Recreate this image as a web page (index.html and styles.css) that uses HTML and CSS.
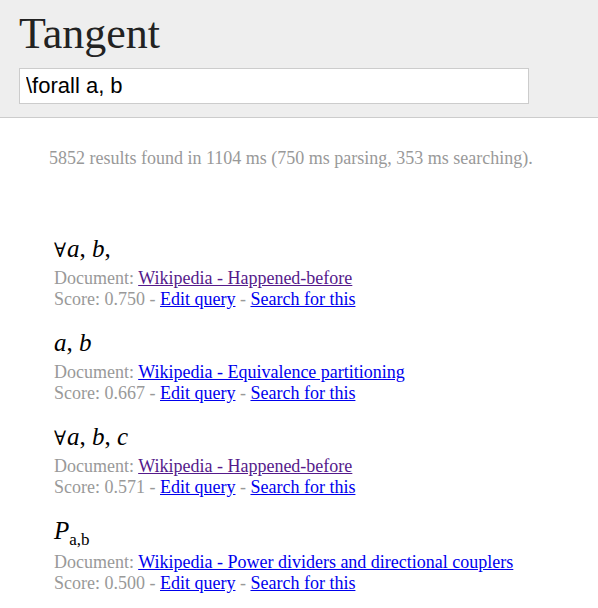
FILE: index.html
```html
<!DOCTYPE html>
<html lang="en">
<head>
    <meta charset="UTF-8">
    <title>Tangent</title>
    <link rel="stylesheet" href="styles.css">
</head>
<body>
    <div class="header">
        <h1>Tangent</h1>
        <input class="query" type="text" value="\forall a, b">
    </div>

    <div class="content">
        <p class="stats">5852 results found in 1104 ms (750 ms parsing, 353 ms searching).</p>

        <div class="results">
            <div class="result">
                <div class="math"><span class="op">&forall;</span><i>a</i>, <i>b</i>,</div>
                <div class="line">Document: <a class="visited" href="#">Wikipedia - Happened-before</a></div>
                <div class="line">Score: 0.750 - <a href="#">Edit query</a> - <a href="#">Search for this</a></div>
            </div>
            <div class="result">
                <div class="math"><i>a</i>, <i>b</i></div>
                <div class="line">Document: <a href="#">Wikipedia - Equivalence partitioning</a></div>
                <div class="line">Score: 0.667 - <a href="#">Edit query</a> - <a href="#">Search for this</a></div>
            </div>
            <div class="result">
                <div class="math"><span class="op">&forall;</span><i>a</i>, <i>b</i>, <i>c</i></div>
                <div class="line">Document: <a class="visited" href="#">Wikipedia - Happened-before</a></div>
                <div class="line">Score: 0.571 - <a href="#">Edit query</a> - <a href="#">Search for this</a></div>
            </div>
            <div class="result result-tall">
                <div class="math"><i>P</i><sub>a,b</sub></div>
                <div class="line">Document: <a href="#">Wikipedia - Power dividers and directional couplers</a></div>
                <div class="line">Score: 0.500 - <a href="#">Edit query</a> - <a href="#">Search for this</a></div>
            </div>
        </div>
    </div>
</body>
</html>
```

FILE: styles.css
```css
body {
    margin: 0;
    font-family: "Liberation Serif", serif;
    background: #fff;
}
.header {
    background-color: #eee;
    border-bottom: 1px solid #ccc;
    padding: 9px 19px 13px;
    height: 95px;
}
.header h1 {
    margin: 0;
    font-weight: normal;
    font-size: 44px;
    line-height: 50px;
    color: #222;
}
.query {
    display: block;
    box-sizing: border-box;
    width: 510px;
    height: 36px;
    margin-top: 9px;
    padding: 0 6px;
    border: 1px solid #ccc;
    background: #fff;
    font-family: "Liberation Sans", sans-serif;
    font-size: 22px;
    color: #000;
    outline: none;
}
.content {
    padding: 0 49px;
}
.stats {
    margin: 0;
    padding-top: 30px;
    font-size: 18px;
    line-height: 21px;
    color: #999;
}
.results {
    padding-top: 60px;
    padding-left: 5px;
}
.result {
    margin-bottom: 13px;
}
.result-tall .math {
    height: 41px;
}
.math {
    height: 39px;
    line-height: 39px;
    font-size: 25px;
    color: #000;
}
.math .op {
    font-family: "DejaVu Serif", serif;
    font-size: 20px;
    font-weight: 300;
    margin-right: 1px;
}
.math sub {
    font-size: 17px;
    vertical-align: -6px;
    line-height: 0;
}
.line {
    font-size: 18px;
    line-height: 21px;
    color: #999;
}
.line a {
    color: #0000ee;
}
.line a.visited {
    color: #551a8b;
}
```
